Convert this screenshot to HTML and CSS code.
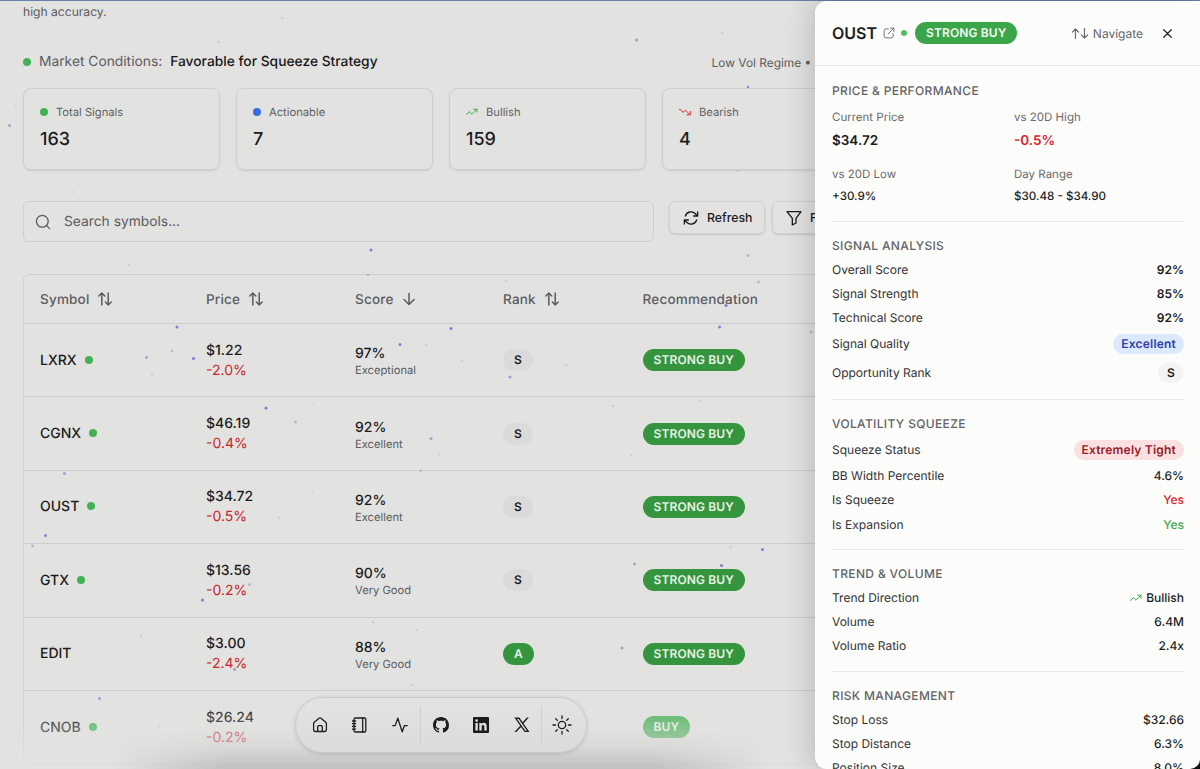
FILE: index.html
```html
<!DOCTYPE html>
<html lang="en">
<head>
	<meta charset="UTF-8">
	<title>Squeeze Signals</title>
	<link rel="stylesheet" href="styles.css">
</head>
<body>
	<!-- shared icons -->
	<svg class="defs" width="0" height="0">
		<symbol id="sort" viewBox="0 0 16 16"><path d="M4.8 14V2M1.8 5l3-3 3 3M11.2 2v12M8.4 11l2.8 3 3-3"/></symbol>
		<symbol id="down" viewBox="0 0 16 16"><path d="M8 2.5v11M3 8.5l5 5 5-5"/></symbol>
		<symbol id="trend-up" viewBox="0 0 24 16"><path d="M1 13l6-6 3.5 4.5c.6.7 1.4.7 2 0L22 2.5M15.500 2.500H22V8.500"/></symbol>
		<symbol id="trend-down" viewBox="0 0 24 16"><path d="M1 3l2 0 5 6 3.500-4c.6-.7 1.400-.7 2 0l8.500 8.500M16 13.500h6.500V7"/></symbol>
	</svg>

	<main class="page">
		<p class="intro">high accuracy.</p>

		<div class="market">
			<span class="dot"></span>
			<span class="market-label">Market Conditions:</span>
			<strong>Favorable for Squeeze Strategy</strong>
			<span class="regime">Low Vol Regime • Tight</span>
		</div>

		<div class="cards">
			<div class="card">
				<div class="card-label"><span class="dot"></span>Total Signals</div>
				<div class="card-num">163</div>
			</div>
			<div class="card">
				<div class="card-label"><span class="dot blue"></span>Actionable</div>
				<div class="card-num">7</div>
			</div>
			<div class="card">
				<div class="card-label"><svg class="trend up"><use href="#trend-up"/></svg>Bullish</div>
				<div class="card-num">159</div>
			</div>
			<div class="card">
				<div class="card-label"><svg class="trend down"><use href="#trend-down"/></svg>Bearish</div>
				<div class="card-num">4</div>
			</div>
		</div>

		<div class="tools">
			<div class="search">
				<svg viewBox="0 0 16 16" width="16" height="16"><circle cx="7.300" cy="7.300" r="5.900"/><path d="M11.600 11.600l3 3"/></svg>
				<span>Search symbols...</span>
			</div>
			<button class="btn" type="button">
				<svg viewBox="0 0 24 24" width="16" height="16"><path d="M22 3v6h-6M2 21v-6h6M3.500 9a9 9 0 0 1 15-3.500L22 9M20.500 15a9 9 0 0 1-15 3.500L2 15"/></svg>
				Refresh
			</button>
			<button class="btn" type="button">
				<svg viewBox="0 0 24 24" width="16" height="16"><path d="M1.500 2.500h21l-7.500 10v7l-5.500 3v-10z"/></svg>
				Filters
			</button>
		</div>

		<div class="table-box">
			<table>
				<colgroup><col class="c1"><col class="c2"><col class="c3"><col class="c4"><col></colgroup>
				<thead>
					<tr>
						<th>Symbol <svg class="sort"><use href="#sort"/></svg></th>
						<th>Price <svg class="sort"><use href="#sort"/></svg></th>
						<th>Score <svg class="sort"><use href="#down"/></svg></th>
						<th>Rank <svg class="sort"><use href="#sort"/></svg></th>
						<th>Recommendation</th>
					</tr>
				</thead>
				<tbody>
					<tr>
						<td><span class="sym">LXRX</span><span class="dot"></span></td>
						<td><div class="price">$1.22</div><div class="chg">-2.0%</div></td>
						<td><div class="score">97%</div><div class="grade">Exceptional</div></td>
						<td><span class="rank">S</span></td>
						<td><span class="rec">STRONG BUY</span></td>
					</tr>
					<tr>
						<td><span class="sym">CGNX</span><span class="dot"></span></td>
						<td><div class="price">$46.19</div><div class="chg">-0.4%</div></td>
						<td><div class="score">92%</div><div class="grade">Excellent</div></td>
						<td><span class="rank">S</span></td>
						<td><span class="rec">STRONG BUY</span></td>
					</tr>
					<tr>
						<td><span class="sym">OUST</span><span class="dot"></span></td>
						<td><div class="price">$34.72</div><div class="chg">-0.5%</div></td>
						<td><div class="score">92%</div><div class="grade">Excellent</div></td>
						<td><span class="rank">S</span></td>
						<td><span class="rec">STRONG BUY</span></td>
					</tr>
					<tr>
						<td><span class="sym">GTX</span><span class="dot"></span></td>
						<td><div class="price">$13.56</div><div class="chg">-0.2%</div></td>
						<td><div class="score">90%</div><div class="grade">Very Good</div></td>
						<td><span class="rank">S</span></td>
						<td><span class="rec">STRONG BUY</span></td>
					</tr>
					<tr>
						<td><span class="sym">EDIT</span></td>
						<td><div class="price">$3.00</div><div class="chg">-2.4%</div></td>
						<td><div class="score">88%</div><div class="grade">Very Good</div></td>
						<td><span class="rank green">A</span></td>
						<td><span class="rec">STRONG BUY</span></td>
					</tr>
					<tr>
						<td><span class="sym">CNOB</span><span class="dot"></span></td>
						<td><div class="price">$26.24</div><div class="chg">-0.2%</div></td>
						<td></td>
						<td></td>
						<td><span class="rec buy">BUY</span></td>
					</tr>
				</tbody>
			</table>
		</div>
	</main>

	<!-- background particles -->
	<svg class="particles" viewBox="0 0 1200 769">
		<g fill="#6d66cf" opacity=".8">
			<circle cx="371" cy="250" r="1.500"/><circle cx="177" cy="327" r="1.500"/><circle cx="193.500" cy="358.500" r="1.600"/>
			<circle cx="400" cy="344.500" r="1.500"/><circle cx="451" cy="328.500" r="1.600"/><circle cx="266" cy="408" r="1.600"/>
			<circle cx="726" cy="305.500" r="1.600"/><circle cx="719.500" cy="327" r="1.500"/><circle cx="762.500" cy="549.500" r="1.500"/>
			<circle cx="721.500" cy="565.500" r="1.600"/><circle cx="202.500" cy="600" r="1.600"/><circle cx="45.500" cy="535.500" r="1.500"/>
			<circle cx="748" cy="87" r="1.200"/>
		</g>
		<g fill="#8d89cf" opacity=".75">
			<circle cx="64.500" cy="473.500" r="1.500"/><circle cx="99.500" cy="698.500" r="1.500"/><circle cx="510" cy="377" r="1.600"/>
			<circle cx="431" cy="438.500" r="1.500"/><circle cx="146.500" cy="357.500" r="1.400"/><circle cx="634.500" cy="564" r="1.500"/>
			<circle cx="622" cy="648" r="1.500"/><circle cx="234.500" cy="669.500" r="1.500"/><circle cx="636.500" cy="40" r="1.500"/>
			<circle cx="9.500" cy="125.500" r="1.500"/>
		</g>
		<g fill="#9794c6" opacity=".55">
			<circle cx="295.500" cy="422" r="1.500"/><circle cx="748" cy="255.500" r="1.500"/><circle cx="758.500" cy="282" r="1.500"/>
			<circle cx="811" cy="332" r="1.500"/><circle cx="249.500" cy="584.500" r="1.500"/><circle cx="32.500" cy="546" r="1.400"/>
			<circle cx="172" cy="351" r="1.300"/><circle cx="368" cy="275" r="1.300"/><circle cx="420.500" cy="471" r="1.200"/>
			<circle cx="53" cy="647" r="1.300"/>
		</g>
		<g fill="#777787" opacity=".25">
			<circle cx="282" cy="18" r="1"/><circle cx="218.500" cy="42" r="1"/><circle cx="74" cy="192" r="1"/><circle cx="722.500" cy="33" r="1"/>
			<circle cx="738" cy="171" r="1"/><circle cx="128.500" cy="265" r="1"/><circle cx="506" cy="281" r="1"/><circle cx="426.500" cy="345" r="1"/>
			<circle cx="462" cy="361" r="1"/><circle cx="566.500" cy="365" r="1"/><circle cx="152" cy="375" r="1"/><circle cx="613" cy="406" r="1"/>
			<circle cx="699.500" cy="401" r="1"/><circle cx="439" cy="454.500" r="1"/><circle cx="631" cy="455.500" r="1"/><circle cx="314" cy="405" r=".8"/>
			<circle cx="313" cy="493" r=".8"/><circle cx="279" cy="517.500" r="1"/><circle cx="141" cy="635.500" r="1"/><circle cx="159" cy="726.500" r="1"/>
			<circle cx="373" cy="622" r="1.200"/><circle cx="416.500" cy="630" r="1"/><circle cx="412.500" cy="685" r="1"/><circle cx="730.500" cy="547" r="1"/>
			<circle cx="375" cy="298" r="1.200"/><circle cx="15" cy="106" r=".8"/>
		</g>
	</svg>

	<div class="fade"></div>
	<div class="glow"></div>

	<nav class="dock">
		<a><svg viewBox="0 0 16 16"><path d="M1.600 6.600c0-.6.200-1 .7-1.400l4.700-3.900c.6-.5 1.400-.5 2 0l4.700 3.900c.5.4.7.8.7 1.400v6.200c0 1-.7 1.700-1.700 1.700H3.300c-1 0-1.700-.7-1.700-1.700zM5.700 14.500V9.600c0-.6.4-1 1-1h2.600c.6 0 1 .4 1 1v4.900"/></svg></a>
		<a><svg viewBox="0 0 16 16"><rect x="2" y="1" width="11.800" height="14" rx="1.300"/><path d="M10.700 1v14M.4 4h3.200M.4 6.700h3.200M.4 9.400h3.200M.4 12.100h3.200"/></svg></a>
		<a><svg viewBox="0 0 16 16"><path d="M.8 8.600h2.400L5.800 1.200 10.200 14.800l2.300-6.200h2.700"/></svg></a>
		<i class="sep"></i>
		<a><svg class="solid" viewBox="0 0 16 16"><path d="M8 0C3.580 0 0 3.580 0 8c0 3.540 2.290 6.530 5.470 7.590.4.070.55-.17.55-.38 0-.19-.01-.82-.01-1.490-2.010.37-2.530-.49-2.690-.94-.09-.23-.48-.94-.82-1.130-.28-.15-.68-.52-.01-.53.63-.01 1.080.58 1.230.82.72 1.210 1.870.87 2.330.66.070-.52.28-.87.51-1.070-1.780-.2-3.640-.89-3.640-3.950 0-.87.31-1.590.82-2.150-.08-.2-.36-1.020.08-2.120 0 0 .67-.21 2.200.82.64-.18 1.320-.27 2-.27s1.360.09 2 .27c1.530-1.040 2.200-.82 2.200-.82.44 1.100.16 1.920.08 2.120.51.56.82 1.270.82 2.150 0 3.070-1.870 3.750-3.650 3.950.29.25.54.73.54 1.480 0 1.070-.01 1.930-.01 2.200 0 .21.15.46.55.38A8.010 8.010 0 0 0 16 8c0-4.420-3.580-8-8-8z"/></svg></a>
		<a><svg class="solid" viewBox="0 0 16 16"><path fill-rule="evenodd" d="M1 0h14a1 1 0 0 1 1 1v14a1 1 0 0 1-1 1H1a1 1 0 0 1-1-1V1a1 1 0 0 1 1-1zM2.400 6v7.600h2.400V6zM3.600 2.200a1.400 1.400 0 1 0 0 2.800 1.400 1.400 0 0 0 0-2.800zM6.300 6v7.600h2.400V9.800c0-1 .3-1.900 1.400-1.900s1.200 1 1.200 2v3.700h2.400V9.400c0-2-.5-3.600-2.900-3.600-1.100 0-1.800.6-2.200 1.200V6z"/></svg></a>
		<a><svg class="solid" viewBox="0 0 16 16"><path fill-rule="evenodd" d="M.4.6h4.900l3.400 4.700L12.900.6h1.900L9.500 6.500l6 8.600h-4.900L7 9.900l-4.700 5.200H.4l5.800-6.400zM3 2l8.300 11.700h1.700L4.700 2z"/></svg></a>
		<i class="sep"></i>
		<a><svg class="sun" viewBox="0 0 20 20"><circle cx="10" cy="10" r="3.700"/><path d="M10 1v2.500M10 16.500V19M1 10h2.500M16.500 10H19M3.700 3.700l1.700 1.700M14.600 14.600l1.700 1.700M3.700 16.300l1.700-1.700M14.600 5.400l1.700-1.700"/></svg></a>
	</nav>

	<div class="topline"></div>
	<div class="corner"></div>

	<!-- detail panel -->
	<aside class="panel">
		<header>
			<h2>OUST</h2>
			<svg class="ext" viewBox="0 0 16 16"><path d="M7 2.500H4A2.500 2.500 0 0 0 1.500 5v7A2.500 2.500 0 0 0 4 14.500h7a2.500 2.500 0 0 0 2.500-2.500V9M10 1.500h4.500V6M14.500 1.500L7 9"/></svg>
			<span class="dot small"></span>
			<span class="rec head">STRONG BUY</span>
			<span class="nav-hint"><svg viewBox="0 0 20 12"><path d="M5 11.500V1M1.500 4.500L5 1l3.500 3.500M15 .5V11M11.500 7.500L15 11l3.500-3.500"/></svg>Navigate</span>
			<svg class="close" viewBox="0 0 10 10"><path d="M.8.8l8.400 8.400M9.200.8L.8 9.200"/></svg>
		</header>

		<section class="perf">
			<h3>Price &amp; Performance</h3>
			<div class="stats">
				<div><label>Current Price</label><b class="big">$34.72</b></div>
				<div><label>vs 20D High</label><b class="big red">-0.5%</b></div>
				<div><label>vs 20D Low</label><b>+30.9%</b></div>
				<div><label>Day Range</label><b>$30.48 - $34.90</b></div>
			</div>
		</section>

		<section>
			<h3>Signal Analysis</h3>
			<div class="row"><span>Overall Score</span><b class="bold">92%</b></div>
			<div class="row"><span>Signal Strength</span><b class="bold">85%</b></div>
			<div class="row"><span>Technical Score</span><b class="bold">92%</b></div>
			<div class="row"><span>Signal Quality</span><b class="tag blue-tag">Excellent</b></div>
			<div class="row"><span>Opportunity Rank</span><b class="tag">S</b></div>
		</section>

		<section>
			<h3>Volatility Squeeze</h3>
			<div class="row"><span>Squeeze Status</span><b class="tag red-tag">Extremely Tight</b></div>
			<div class="row"><span>BB Width Percentile</span><b>4.6%</b></div>
			<div class="row"><span>Is Squeeze</span><b class="red">Yes</b></div>
			<div class="row"><span>Is Expansion</span><b class="grn">Yes</b></div>
		</section>

		<section>
			<h3>Trend &amp; Volume</h3>
			<div class="row"><span>Trend Direction</span><b><svg class="trend up"><use href="#trend-up"/></svg>Bullish</b></div>
			<div class="row"><span>Volume</span><b>6.4M</b></div>
			<div class="row"><span>Volume Ratio</span><b>2.4x</b></div>
		</section>

		<section>
			<h3>Risk Management</h3>
			<div class="row"><span>Stop Loss</span><b>$32.66</b></div>
			<div class="row"><span>Stop Distance</span><b>6.3%</b></div>
			<div class="row"><span>Position Size</span><b>8.0%</b></div>
		</section>
	</aside>
</body>
</html>
```
FILE: styles.css
```css
* {
	box-sizing: border-box;
}
body {
	margin: 0;
	width: 1200px;
	height: 769px;
	overflow: hidden;
	position: relative;
	background: #e2e2e1;
	color: #1c1c1c;
	font-family: Inter, "Liberation Sans", sans-serif;
	font-size: 14px;
	text-rendering: geometricPrecision;
}
svg {
	fill: none;
	stroke: currentColor;
	stroke-width: 1.3;
	stroke-linecap: round;
	stroke-linejoin: round;
	flex: none;
}
.defs {
	position: absolute;
}
.page {
	width: 1060px;
	height: 769px;
	overflow: hidden;
	padding-left: 23px;
}
.intro {
	margin: 0;
	padding-top: 2px;
	font-size: 12.100px;
	line-height: 19px;
	color: #5c5c60;
}
.dot {
	display: inline-block;
	width: 8px;
	height: 8px;
	border-radius: 50%;
	background: #42b155;
	flex: none;
}
.dot.blue {
	background: #3a6ddb;
}
.dot.small {
	width: 6px;
	height: 6px;
	background: #4fc163;
}
.market {
	display: flex;
	align-items: center;
	height: 20px;
	margin-top: 31px;
	width: 920px;
	font-size: 13.800px;
}
.market-label {
	margin: 0 8px;
	color: #5c5c60;
}
.market strong {
	font-weight: 500;
	color: #171717;
}
.regime {
	margin-left: 334px;
	font-size: 11.900px;
	color: #5c5c60;
	white-space: nowrap;
}
.cards {
	display: flex;
	gap: 16px;
	margin-top: 16px;
}
.card {
	width: 197px;
	height: 82px;
	padding: 15px 16px;
	border: 1px solid #cfcfce;
	border-radius: 8px;
	box-shadow: 0 1px 2px rgba(0,0,0,.1);
	flex: none;
}
.card-label {
	display: flex;
	align-items: center;
	gap: 8px;
	height: 16px;
	font-size: 11.200px;
	color: #626266;
}
.card-num {
	margin-top: 7px;
	font-size: 18px;
	line-height: 26px;
	font-weight: 500;
}
.trend {
	width: 12px;
	height: 8px;
	stroke-width: 2;
}
.up { color: #42a94f; }
.down { color: #d3302f; }
.tools {
	display: flex;
	align-items: flex-start;
	margin-top: 31px;
}
.search {
	display: flex;
	align-items: center;
	width: 631px;
	height: 41px;
	margin-right: 8px;
	padding-left: 11px;
	border: 1px solid #cfcfce;
	border-radius: 6px;
	color: #5c5c60;
}
.search span {
	margin-left: 13px;
	padding-top: 1px;
	font-size: 13.800px;
}
.btn {
	display: flex;
	align-items: center;
	gap: 8px;
	width: 96px;
	height: 33px;
	margin-left: 7px;
	padding: 0 12px 0 13px;
	border: 1px solid #cfcfce;
	border-radius: 6px;
	background: none;
	box-shadow: 0 1px 2px rgba(0,0,0,.12);
	font-family: inherit;
	font-size: 12.300px;
	font-weight: 500;
	color: #1c1c1c;
}
.btn svg {
	stroke-width: 2;
}
.table-box {
	margin-top: 32px;
	border: 1px solid #cfcfce;
	border-radius: 6px;
}
table {
	width: 100%;
	border-collapse: separate;
	border-spacing: 0;
	table-layout: fixed;
}
.c1 { width: 166px; }
.c2 { width: 149px; }
.c3 { width: 148px; }
.c4 { width: 139.500px; }
th, td {
	padding: 0 0 0 16px;
	text-align: left;
	border-bottom: 1px solid #cdcdcd;
}
th {
	height: 49px;
	padding-top: 1px;
	font-size: 13.5px;
	font-weight: 500;
	letter-spacing: .2px;
	color: #5c5c60;
}
td {
	height: 73.400px;
}
.sort {
	width: 16px;
	height: 16px;
	margin-left: 4px;
	vertical-align: -3px;
	stroke-width: 1.500;
}
.sym {
	font-weight: 500;
	margin-right: 8px;
}
td .dot {
	vertical-align: 1px;
}
.price, .chg {
	line-height: 20px;
	position: relative;
	top: .500px;
}
.price, .score {
	font-weight: 500;
}
.chg {
	color: #c9252c;
}
.score {
	line-height: 18px;
	padding-top: 3px;
}
.grade {
	font-size: 11.200px;
	line-height: 15px;
	color: #5c5c60;
}
.rank {
	display: inline-block;
	padding: 0 11px;
	border-radius: 11px;
	font-size: 12px;
	line-height: 22px;
	font-weight: 600;
	background: #dadadb;
}
.rank.green {
	background: #35953f;
	color: #e6f2e6;
}
.rec {
	display: inline-block;
	padding: 0 11px;
	border-radius: 11px;
	background: #35953f;
	color: #e6f2e6;
	font-size: 12px;
	font-weight: 600;
	line-height: 22px;
	letter-spacing: .120px;
}
.rec.buy {
	background: #4fb25c;
}
.particles {
	position: absolute;
	left: 0;
	top: 0;
	width: 1200px;
	height: 769px;
	stroke: none;
}
/* page content dissolves behind the dock */
.fade {
	position: absolute;
	left: 0;
	bottom: 0;
	width: 816px;
	height: 69px;
	background: linear-gradient(rgba(226,226,225,0), rgba(226,226,225,.35) 40%, rgba(226,226,225,.55) 60%, rgba(226,226,225,.95));
}
.glow {
	position: absolute;
	left: 110px;
	top: 729px;
	width: 660px;
	height: 40px;
	background: linear-gradient(rgba(0,0,0,0), rgba(0,0,0,.04) 45%, rgba(0,0,0,.15));
	mask-image: linear-gradient(to right, transparent, #000 18%, #000 82%, transparent);
}
.dock {
	position: absolute;
	left: 295px;
	top: 697px;
	width: 292px;
	height: 56px;
	display: flex;
	align-items: center;
	padding: 0 3.500px;
	border: 1px solid #cbcbca;
	border-radius: 28px;
	background: linear-gradient(#e3e3e2, #dbdbda);
	box-shadow: 0 1px 4px rgba(0,0,0,.14);
}
.dock a {
	width: 40.400px;
	flex: none;
	display: flex;
	justify-content: center;
}
.dock svg {
	width: 16px;
	height: 16px;
}
.dock .sun {
	width: 20px;
	height: 20px;
}
.dock .solid {
	fill: currentColor;
	stroke: none;
}
.sep {
	width: 1px;
	height: 39px;
	margin: 0 -.5px;
	background: #cfcfce;
}
.topline {
	position: absolute;
	left: 0;
	top: 0;
	width: 1200px;
	height: 1px;
	background: #6681ab;
}
.corner {
	position: absolute;
	right: 0;
	bottom: 0;
	width: 14px;
	height: 14px;
	background: #111;
}
.panel {
	position: absolute;
	left: 815px;
	top: 1px;
	width: 385px;
	height: 768px;
	overflow: hidden;
	border-radius: 12px 0 10px 12px;
	background: #fcfcfb;
	box-shadow: -2px 0 30px rgba(0,0,0,.2);
	font-size: 12px;
}
.panel header {
	display: flex;
	align-items: center;
	height: 65px;
	padding: 0 28px 0 17px;
	border-bottom: 1px solid #e6e6e6;
}
.panel h2 {
	margin: 0;
	font-size: 16px;
	font-weight: 600;
}
.ext {
	width: 12px;
	height: 12px;
	margin: 0 6px 0 6px;
	color: #707074;
}
.rec.head {
	margin-left: 8px;
	background: #3ba549;
	color: #f4fbf4;
}
.nav-hint {
	display: flex;
	align-items: center;
	gap: 4px;
	margin-left: auto;
	color: #66666a;
}
.nav-hint svg {
	width: 18px;
	height: 11px;
}
.close {
	width: 9px;
	height: 9px;
	margin-left: 20px;
}
section {
	margin: 0 16px 0 17px;
	padding: 16.200px 0;
	border-bottom: 1px solid #e6e6e6;
}
.perf {
	padding: 17px 0 14.700px;
}
h3 {
	margin: 0;
	font-size: 12px;
	line-height: 16px;
	font-weight: 500;
	letter-spacing: .350px;
	text-transform: uppercase;
	color: #626266;
}
.stats {
	display: grid;
	grid-template-columns: 182px 1fr;
	row-gap: 11px;
	padding-top: 8px;
}
.stats label {
	display: block;
	font-size: 11.500px;
	line-height: 20px;
	margin-bottom: 2px;
	color: #6a6a6e;
}
.stats b {
	display: block;
	font-size: 11.600px;
	line-height: 20px;
	font-weight: 500;
}
.stats .big {
	font-size: 13.500px;
	line-height: 24px;
	font-weight: 600;
}
.row {
	display: flex;
	justify-content: space-between;
	align-items: center;
	margin-top: 8.150px;
	line-height: 16px;
	color: #333336;
}
.row b {
	font-weight: 500;
	color: #1c1c1c;
}
.row .bold {
	font-weight: 600;
}
.row .trend {
	margin-right: 4px;
}
.row .tag {
	min-width: 26px;
	padding: 0 8px;
	border-radius: 10px;
	line-height: 20px;
	font-weight: 600;
	letter-spacing: .200px;
	text-align: center;
	background: #f3f3f4;
}
.row .blue-tag {
	background: #dce8fc;
	color: #2c41ae;
}
.row .red-tag {
	background: #fae0e0;
	color: #98202a;
}
.panel .red {
	color: #d9262e;
}
.panel .grn {
	color: #42a94f;
}
```
